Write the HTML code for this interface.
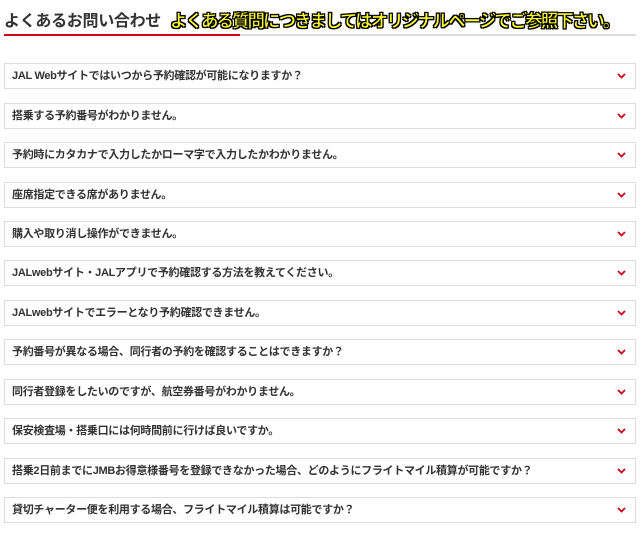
<!DOCTYPE html>
<html><head><meta charset="utf-8"><style>
body{margin:0;background:#fff;width:642px;height:552px;overflow:hidden;font-family:"Liberation Sans","Noto Sans CJK JP",sans-serif;position:relative}
.t{position:absolute;left:4px;top:7px;font-size:16px;font-weight:bold;color:#333;letter-spacing:-0.3px}
.y{position:absolute;left:170px;top:8px;font-size:17.5px;font-weight:bold;color:#ffff33;letter-spacing:-2px;-webkit-text-stroke:0.6px #000;text-shadow:1px 1px 0 #000,-1px -1px 0 #000,1px -1px 0 #000,-1px 1px 0 #000;white-space:nowrap}
.g{position:absolute;left:4px;top:34px;width:632px;height:2px;background:#ddd}
.r{position:absolute;left:4px;top:34px;width:236px;height:2px;background:#d0021b}
.b{position:absolute;left:4px;width:630px;height:24px;border:1px solid #ddd;font-size:11px;font-weight:bold;color:#333;line-height:24px;box-sizing:content-box;letter-spacing:-0.3px}
.b span{position:absolute;left:7px;top:0;white-space:nowrap}
.b svg{position:absolute;right:9px;top:9px}
</style></head><body>
<div class="t">よくあるお問い合わせ</div>
<div class="y">よくある質問につきましてはオリジナルページでご参照下さい。</div>
<div class="g"></div><div class="r"></div>
<div class="b" style="top:63px"><span>JAL Webサイトではいつから予約確認が可能になりますか？</span><svg width="9" height="6"><path d="M1 1L4.5 4.5L8 1" stroke="#d0021b" stroke-width="1.8" fill="none"/></svg></div>
<div class="b" style="top:103px"><span>搭乗する予約番号がわかりません。</span><svg width="9" height="6"><path d="M1 1L4.5 4.5L8 1" stroke="#d0021b" stroke-width="1.8" fill="none"/></svg></div>
<div class="b" style="top:142px"><span>予約時にカタカナで入力したかローマ字で入力したかわかりません。</span><svg width="9" height="6"><path d="M1 1L4.5 4.5L8 1" stroke="#d0021b" stroke-width="1.8" fill="none"/></svg></div>
<div class="b" style="top:182px"><span>座席指定できる席がありません。</span><svg width="9" height="6"><path d="M1 1L4.5 4.5L8 1" stroke="#d0021b" stroke-width="1.8" fill="none"/></svg></div>
<div class="b" style="top:221px"><span>購入や取り消し操作ができません。</span><svg width="9" height="6"><path d="M1 1L4.5 4.5L8 1" stroke="#d0021b" stroke-width="1.8" fill="none"/></svg></div>
<div class="b" style="top:260px"><span>JALwebサイト・JALアプリで予約確認する方法を教えてください。</span><svg width="9" height="6"><path d="M1 1L4.5 4.5L8 1" stroke="#d0021b" stroke-width="1.8" fill="none"/></svg></div>
<div class="b" style="top:300px"><span>JALwebサイトでエラーとなり予約確認できません。</span><svg width="9" height="6"><path d="M1 1L4.5 4.5L8 1" stroke="#d0021b" stroke-width="1.8" fill="none"/></svg></div>
<div class="b" style="top:339px"><span>予約番号が異なる場合、同行者の予約を確認することはできますか？</span><svg width="9" height="6"><path d="M1 1L4.5 4.5L8 1" stroke="#d0021b" stroke-width="1.8" fill="none"/></svg></div>
<div class="b" style="top:379px"><span>同行者登録をしたいのですが、航空券番号がわかりません。</span><svg width="9" height="6"><path d="M1 1L4.5 4.5L8 1" stroke="#d0021b" stroke-width="1.8" fill="none"/></svg></div>
<div class="b" style="top:418px"><span>保安検査場・搭乗口には何時間前に行けば良いですか。</span><svg width="9" height="6"><path d="M1 1L4.5 4.5L8 1" stroke="#d0021b" stroke-width="1.8" fill="none"/></svg></div>
<div class="b" style="top:458px"><span>搭乗2日前までにJMBお得意様番号を登録できなかった場合、どのようにフライトマイル積算が可能ですか？</span><svg width="9" height="6"><path d="M1 1L4.5 4.5L8 1" stroke="#d0021b" stroke-width="1.8" fill="none"/></svg></div>
<div class="b" style="top:497px"><span>貸切チャーター便を利用する場合、フライトマイル積算は可能ですか？</span><svg width="9" height="6"><path d="M1 1L4.5 4.5L8 1" stroke="#d0021b" stroke-width="1.8" fill="none"/></svg></div>
</body></html>
